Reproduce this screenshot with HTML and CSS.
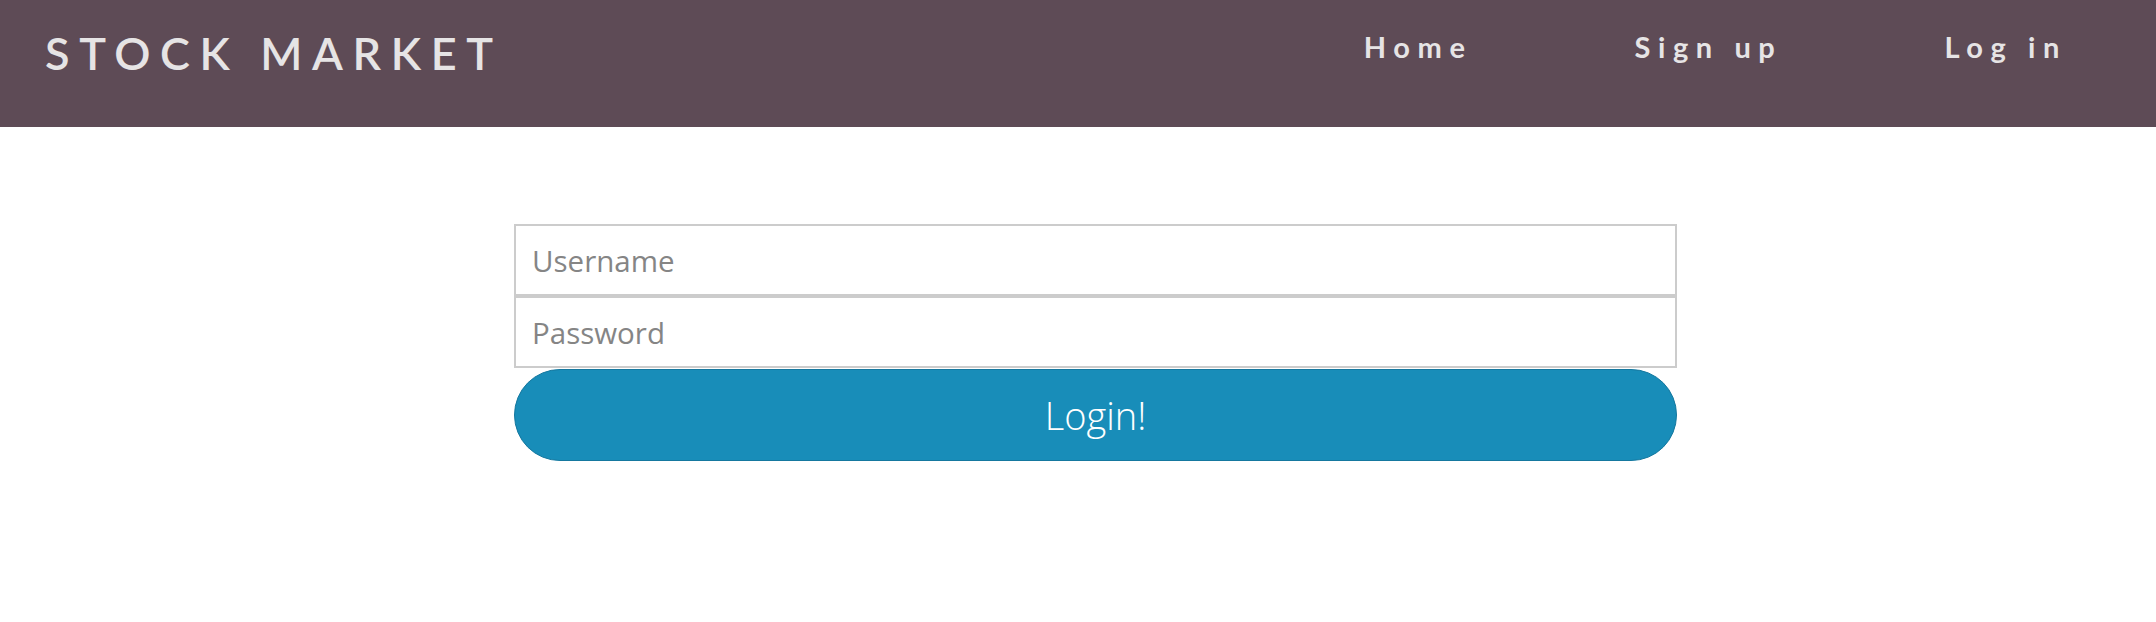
FILE: index.html
```html
<!DOCTYPE html>
<html lang="en">
<head>
<meta charset="utf-8">
<title>Stock Market - Log in</title>
<link rel="stylesheet" href="styles.css">
</head>
<body>
<header class="topbar">
  <div class="brand">STOCK MARKET</div>
  <nav class="nav">
    <a class="nav-link" href="#">Home</a>
    <a class="nav-link" href="#">Sign up</a>
    <a class="nav-link" href="#">Log in</a>
  </nav>
</header>
<main class="main">
  <form class="login-form">
    <input class="field" type="text" placeholder="Username">
    <input class="field" type="password" placeholder="Password">
    <button class="submit" type="button">Login!</button>
  </form>
</main>
</body>
</html>
```

FILE: styles.css
```css
* { box-sizing: border-box; }

html, body {
  margin: 0;
  padding: 0;
  background: #ffffff;
}

body {
  font-family: "Open Sans", "Liberation Sans", sans-serif;
}

.topbar {
  height: 127px;
  background: #5e4b56;
  display: flex;
  justify-content: space-between;
  align-items: flex-start;
  padding: 0 89px 0 45px;
}

.brand {
  font-family: "Lato", "Noto Sans", sans-serif;
  font-size: 45px;
  line-height: 1.2;
  font-weight: 600;
  letter-spacing: 9.6px;
  color: #e6e4e5;
  margin-top: 26px;
}

.nav {
  display: flex;
  gap: 162px;
  margin-top: 30px;
}

.nav-link {
  font-family: "Lato", "Noto Sans", sans-serif;
  font-size: 29px;
  line-height: 1.2;
  font-weight: 700;
  letter-spacing: 7.6px;
  color: #e6e4e5;
  text-decoration: none;
}

.main {
  padding: 97px 479px 0 514px;
}

.login-form {
  display: flex;
  flex-direction: column;
}

.field {
  display: block;
  width: 100%;
  height: 72px;
  border: 2px solid #cccccc;
  padding: 0 16px;
  font-family: "Open Sans", "Liberation Sans", sans-serif;
  font-size: 29.5px;
  color: #333333;
  background: #ffffff;
  outline: none;
  margin: 0;
}

.field::placeholder {
  color: #858585;
  opacity: 1;
}

.submit {
  display: block;
  width: 100%;
  height: 92px;
  margin-top: 1px;
  border: 1px solid #15789f;
  border-radius: 46px;
  background: #188db9;
  color: #ffffff;
  font-family: "Open Sans", "Liberation Sans", sans-serif;
  font-size: 38px;
  font-weight: 300;
  cursor: pointer;
  padding: 0;
}
```
